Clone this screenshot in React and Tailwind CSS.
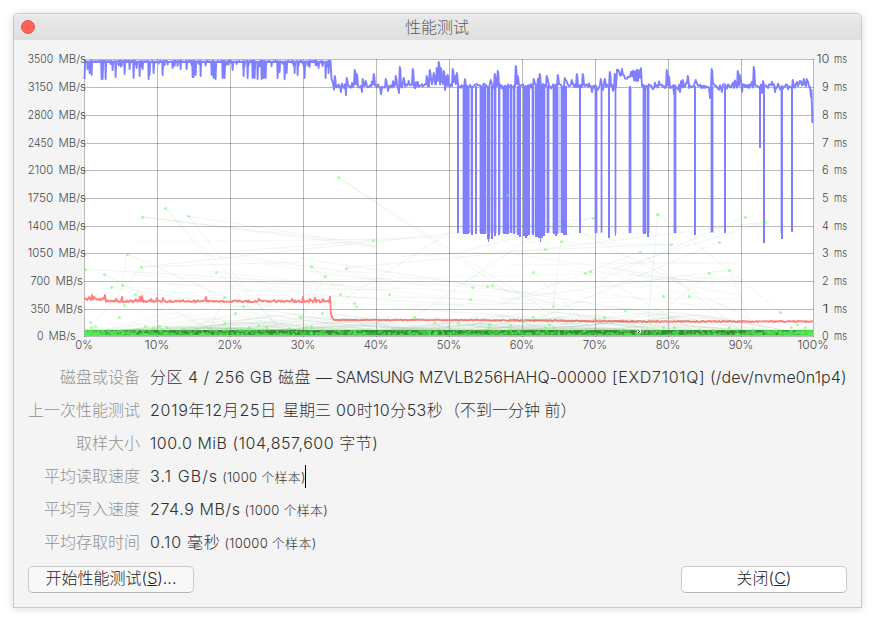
import React from 'react';

const LEFT = 84;
const RIGHT = 813;
const GRID_X = [84, 157, 230, 303, 376, 449, 522, 595, 668, 741, 813];
const GRID_Y = [59, 87, 115, 143, 170, 198, 226, 253, 281, 309, 336];

function makeRandom(seed) {
  let s = seed;
  return () => {
    s = (s * 1664525 + 1013904223) % 4294967296;
    return s / 4294967296;
  };
}

const FAST_DIPS = [
  [84, 79], [87, 69], [89, 73], [91, 75], [101, 79], [102, 79], [105, 79], [112, 70], [115, 77], [124, 74], [129, 69], [133, 78], [136, 68],
  [139, 76], [142, 69], [148, 79], [149, 75], [153, 73], [162, 75], [172, 68], [180, 69], [186, 69], [192, 77], [193, 77], [195, 75],
  [200, 76], [211, 75], [213, 78], [215, 79], [222, 78], [224, 78], [232, 70], [243, 76], [247, 78], [252, 78], [254, 78], [257, 79],
  [261, 79], [263, 78], [265, 78], [277, 78], [279, 72], [284, 79], [286, 73], [294, 73], [297, 75], [304, 78], [309, 67], [318, 68],
  [325, 78], [328, 73],
];

const PEAKS = {
  335: 76, 347: 78, 355: 70, 357: 74, 363: 79, 366: 81, 374: 74, 386: 79, 396: 76, 400: 67, 404: 78, 409: 81, 413: 69, 418: 82, 427: 76,
  430: 70, 434: 73, 437: 68, 439: 62, 441: 68, 444: 71, 448: 75, 453: 69, 455: 76, 457: 73, 491: 80, 495: 74, 498: 71, 516: 66, 518: 76,
  534: 79, 540: 74, 547: 76, 558: 75, 565: 78, 572: 80, 577: 74, 583: 74, 601: 79, 605: 79, 610: 72, 615: 74, 667: 70, 669: 76, 683: 80,
  688: 76, 696: 80, 712: 69, 738: 71, 740: 75, 754: 67, 793: 80, 800: 81, 804: 79, 807: 79,
};
const TROUGHS = { 341: 92, 346: 95, 362: 92, 381: 94, 388: 91, 399: 93, 434: 90, 445: 90, 592: 92, 674: 94, 680: 92, 710: 98, 722: 92, 742: 92, 762: 93, 775: 92 };

function readPath() {
  const rnd = makeRandom(71);
  const dips = {};
  FAST_DIPS.forEach(([x, y]) => { dips[x] = y; });
  let d = 'M84.5 79';
  for (let x = 85; x <= 330; x += 1) {
    d += ` L${x + 0.2} ${(60.6 + rnd() * 1.4).toFixed(1)}`;
    const bottom = dips[x] || (rnd() < 0.2 ? 63 + rnd() * 4 : 62);
    d += ` L${x + 0.6} ${bottom.toFixed(1)}`;
  }
  d += ' L330.5 61 L331.5 79 L333 83';
  for (let x = 334; x <= 809; x += 1) {
    let y = 84 + rnd() * 4;
    if (rnd() < 0.15) y -= rnd() * 6;
    if (rnd() < 0.15) y += rnd() * 4;
    if (x > 429 && x < 447) y = 73 + rnd() * 13;
    if (x >= 617 && x <= 622) y = 69 + rnd() * 8;
    if (x > 622 && x < 630) y = 75 + rnd() * 7;
    if (x >= 630 && x <= 641) y = x % 2 ? 68 + rnd() * 4 : 76 + rnd() * 6;
    if (PEAKS[x]) d += ` L${x - 0.3} ${PEAKS[x]} L${x + 0.3} ${PEAKS[x] + 2}`;
    else if (TROUGHS[x]) d += ` L${x} ${TROUGHS[x]}`;
    else d += ` L${x} ${y.toFixed(1)}`;
  }
  return `${d} L810 87 L811 97 L811.5 90 L812.3 123`;
}

// [x, width, bottom] of every drop below the read plateau
const DROPS = [
  [457, 2, 233], [463, 6, 234], [471, 2, 235], [475, 2, 234], [480, 6, 234], [487, 3, 239], [488, 1, 242], [491, 2, 239], [494, 2, 236],
  [498, 2, 235], [503, 6, 234], [510, 2, 233], [513, 2, 234], [517, 2, 235], [519, 2, 237], [523, 5, 236], [525, 2, 238], [528, 2, 235],
  [532, 2, 235], [535, 3, 237], [538, 5, 238], [540, 1, 242], [542, 3, 236], [547, 2, 233], [553, 5, 234], [555, 2, 236], [561, 2, 233],
  [563, 4, 235], [579, 2, 233], [595, 2, 233], [601, 1, 232], [608, 2, 238], [615, 1, 236], [629, 2, 233], [643, 3, 234], [647, 2, 237],
  [674, 2, 233], [694, 2, 235], [711, 2, 232], [724, 2, 233], [759, 2, 148], [763, 2, 243], [781, 2, 239], [791, 2, 232],
];
const HAZES = [[462, 8], [469, 3], [476, 1], [479, 14], [493, 4], [500, 1], [502, 9], [512, 4], [516, 5], [524, 6], [531, 15], [546, 4], [552, 8], [560, 7], [594, 4], [600, 3], [614, 3], [628, 4], [642, 8], [673, 4], [710, 4], [780, 3]];

function writePath() {
  const rnd = makeRandom(19);
  const peaks = { 89: 297, 92: 295, 94: 297, 103: 298, 105: 295, 116: 299, 122: 297, 136: 299, 140: 297, 142: 296, 151: 299, 157: 298, 163: 298, 183: 300, 206: 297, 259: 299, 274: 300, 292: 299, 303: 297, 310: 299, 315: 298, 323: 299 };
  let d = 'M84.5 299.5';
  for (let x = 85; x < 330; x += 1) {
    const base = x < 106 ? 299.5 : 301.4;
    const y = peaks[x] || base + (rnd() - 0.55) * 2;
    d += ` L${x} ${y.toFixed(1)}`;
  }
  d += ' L330 297 L331 314 L332.5 318';
  for (let x = 334; x <= 813; x += 1) {
    const base = x < 460 ? 320 : x < 640 ? 320 + (x - 460) / 120 : 321.5;
    d += ` L${x} ${(base + (rnd() - 0.5) * (x < 500 ? 0.8 : 1.3)).toFixed(1)}`;
  }
  return d;
}

const DOTS = [
  [85, 269], [104, 274], [111, 287], [122, 285], [127, 254], [141, 267], [142, 217], [165, 208], [188, 216], [216, 272], [224, 297], [243, 306],
  [235, 313], [135, 294], [124, 305], [119, 317], [90, 322], [91, 327], [95, 326], [145, 326], [153, 328], [159, 326], [166, 327], [224, 323],
  [249, 327], [258, 325], [266, 327], [289, 328], [338, 177], [373, 240], [311, 266], [346, 268], [325, 276], [340, 294], [389, 294], [354, 303],
  [356, 306], [322, 313], [300, 317], [414, 317], [434, 322], [306, 327], [311, 326], [448, 326], [458, 323], [472, 287], [470, 299], [487, 286],
  [492, 285], [507, 195], [489, 324], [489, 327], [510, 325], [533, 272], [545, 249], [561, 241], [553, 306], [533, 317], [524, 320], [549, 324],
  [545, 327], [553, 327], [593, 218], [585, 273], [590, 271], [604, 317], [625, 310], [640, 252], [657, 214], [671, 244], [663, 296], [689, 296],
  [650, 322], [663, 327], [674, 327], [709, 273], [729, 270], [719, 242], [745, 217], [765, 222], [780, 312], [797, 324], [729, 327], [791, 327], [805, 327],
];

const THREADS = [
  [165, 208, 270, 332], [165, 208, 284, 332], [188, 216, 278, 328], [188, 216, 376, 246], [142, 217, 376, 247], [142, 217, 320, 238],
  [339, 178, 545, 310], [339, 178, 520, 300], [127, 254, 122, 285], [127, 254, 240, 304], [141, 267, 91, 327], [141, 267, 300, 262],
  [141, 267, 593, 218], [85, 269, 346, 285], [104, 274, 216, 332], [111, 287, 400, 330], [311, 266, 354, 303], [325, 276, 300, 320],
  [373, 240, 230, 252], [346, 268, 545, 249], [561, 241, 553, 306], [414, 317, 545, 228], [545, 249, 765, 222], [533, 272, 590, 327],
  [593, 218, 460, 252], [658, 214, 647, 332], [658, 214, 729, 270], [729, 270, 780, 312], [729, 270, 755, 332], [729, 270, 500, 300],
  [709, 273, 650, 322], [719, 242, 540, 318], [745, 217, 600, 280], [765, 222, 610, 270], [671, 244, 400, 256], [640, 252, 500, 305],
  [508, 195, 770, 330], [508, 195, 340, 302], [590, 271, 690, 328], [640, 252, 740, 330], [300, 258, 748, 328], [225, 297, 208, 332],
];

function buildThreads() {
  const rnd = makeRandom(503);
  const far = [];
  const near = [];
  for (let i = 0; i < 44; i += 1) {
    const x = 90 + rnd() * 560;
    const y = 238 + rnd() * 72;
    far.push([x, y, Math.min(740, x + 80 + rnd() * 260), Math.min(331, y + (rnd() - 0.2) * 50)]);
  }
  for (let i = 0; i < 120; i += 1) {
    const x = 150 + rnd() * 560;
    const y = 312 + rnd() * 18;
    near.push([Math.max(100, x - 40 - rnd() * 160), 331, x, y]);
    near.push([x, y, Math.min(790, x + 30 + rnd() * 120), 331]);
  }
  return { far, near };
}

function buildSpeckles() {
  const rnd = makeRandom(87);
  const list = [];
  for (let i = 0; i < 760; i += 1) {
    const x = LEFT + 1 + rnd() * (RIGHT - LEFT - 2);
    const pick = rnd();
    const y = pick < 0.55 ? 333 + rnd() * 2 : pick < 0.9 ? 330 + rnd() * 4 : 329.6 + rnd() * 1.5;
    list.push([x.toFixed(1), y.toFixed(1)]);
  }
  for (let i = 0; i < 240; i += 1) {
    const x = i % 2 ? 85 + rnd() * rnd() * 90 : 812 - rnd() * rnd() * 80;
    list.push([x.toFixed(1), (330.5 + rnd() * 4).toFixed(1)]);
  }
  return list;
}

const READ = readPath();
const WRITE = writePath();
const { far: FAR, near: NEAR } = buildThreads();
const SPECKLES = buildSpeckles();

const lines = (list) => list.map(([a, b, c, d]) => `M${a.toFixed(0)} ${b.toFixed(0)}L${c.toFixed(0)} ${d.toFixed(0)}`).join('');

const SPEEDS = [3500, 3150, 2800, 2450, 2100, 1750, 1400, 1050, 700, 350, 0];

function Label({ x, y, width, children }) {
  return <text x={x} y={y} textLength={width} lengthAdjust="spacingAndGlyphs">{children}</text>;
}

function Chart() {
  return (
    <svg className="block h-[321px] w-[847px] shrink-0" viewBox="14 40 847 321">
      <rect x="84" y="59" width="730" height="278" fill="#fff" />
      <g fill="#8080ff">
        {HAZES.map(([x, w]) => <rect key={x} x={x} y="88" width={w} height="145" opacity="0.38" />)}
      </g>
      <path
        d={GRID_X.map((x) => `M${x + 0.5} 59V337`).join('') + GRID_Y.map((y) => `M84 ${y + 0.5}H814`).join('')}
        stroke="#000"
        strokeOpacity="0.27"
        fill="none"
      />
      <g fill="#8080ff">
        {DROPS.map(([x, w, b]) => <rect key={`${x}-${w}`} x={x} y="86" width={w} height={b - 86} />)}
      </g>
      <path d={READ} fill="none" stroke="#8080ff" strokeWidth="1.9" strokeLinejoin="round" />
      <path d={WRITE} fill="none" stroke="#ff8080" strokeWidth="1.9" strokeLinejoin="round" />
      <path d={lines(THREADS)} stroke="#246b24" strokeOpacity="0.07" fill="none" />
      <path d={lines(FAR)} stroke="#246b24" strokeOpacity="0.045" fill="none" />
      <path d={lines(NEAR)} stroke="#246b24" strokeOpacity="0.04" fill="none" />
      <rect x="85" y="330" width="728" height="5.5" fill="#358a35" />
      <rect x="85" y="334.8" width="728" height="1.2" fill="#5df05d" />
      <g fill="#55ee55">
        {SPECKLES.map(([x, y], i) => <circle key={i} cx={x} cy={y} r="1.2" opacity="0.5" />)}
      </g>
      <g fill="#66ff66" fillOpacity="0.58">
        {DOTS.map(([x, y]) => <circle key={`${x}-${y}`} cx={x + 0.5} cy={y + 0.5} r="1.55" />)}
      </g>
      <rect x="637" y="330" width="4" height="3" fill="#fff" />
      <path d="M638 330.5h1M639 331.5h1M638 332.5h1" stroke="#333" />
      <g fill="#484848" fontFamily="Inter, 'Liberation Sans', sans-serif" fontSize="11" fontWeight="300">
        {SPEEDS.map((v, i) => {
          const start = v >= 1000 ? 27.8 : v > 0 ? 30.5 : 37;
          const digits = v >= 1000 ? 25.4 : v > 0 ? 19.5 : 6.5;
          const unit = v >= 1000 ? 58.5 : v > 0 ? 55.5 : 48.5;
          return (
            <g key={v}>
              <Label x={start} y={GRID_Y[i] + 4} width={digits}>{v}</Label>
              <Label x={unit} y={GRID_Y[i] + 4} width={27.5}>MB/s</Label>
            </g>
          );
        })}
        {SPEEDS.map((v, i) => (
          <g key={v}>
            <Label x={i === 0 ? 816.5 : 822} y={GRID_Y[i] + 4} width={i === 0 ? 13 : 6.7}>{10 - i}</Label>
            <Label x={834} y={GRID_Y[i] + 4} width={13}>ms</Label>
          </g>
        ))}
        {GRID_X.map((x, i) => {
          const wide = i === 0 ? 17.5 : i === 10 ? 31 : 24.5;
          return <Label key={x} x={x - wide / 2} y={349} width={wide}>{`${i * 10}%`}</Label>;
        })}
      </g>
    </svg>
  );
}

function Row({ label, children }) {
  return (
    <div className="flex h-[33px] items-center whitespace-nowrap text-[16px] leading-[33px]">
      <span className="w-[126px] shrink-0 text-right text-[#929292]">{label}</span>
      <span className="ml-[10px] flex items-center text-[#303030]">{children}</span>
    </div>
  );
}

function Small({ children }) {
  return <span className="ml-[4px] pt-[2px] text-[13px] tracking-[0.27px]">{children}</span>;
}

export default function App() {
  return (
    <div className="h-[621px] w-[875px] overflow-hidden bg-white pl-[13px] pt-[13px] font-['Inter','Noto_Sans_CJK_SC',sans-serif] font-light">
      <div className="flex h-[595px] w-[849px] flex-col overflow-hidden rounded-t-[5px] border border-[#c9c9c9] bg-[#f4f4f4] shadow-[0_1px_9px_rgba(0,0,0,0.14)]">
        <div className="flex h-[26px] shrink-0 items-center border-t border-[#f3f3f3] bg-gradient-to-b from-[#e9e9e9] to-[#dfdfdf] pb-[2px]">
          <span className="ml-[7px] size-[14px] rounded-full border border-[#e2574e] bg-[#ff6157]" />
          <span className="mr-[22px] flex-1 text-center text-[16px] leading-[22px] text-[#5c5c5c]">性能测试</span>
        </div>
        <Chart />
        <div className="flex shrink-0 flex-col">
          <Row label="磁盘或设备">
            <span className="w-[186px] tracking-[0.47px]">分区 4 / 256 GB 磁盘 —</span>
            <span className="w-[83px] tracking-[-0.5px]">SAMSUNG</span>
            <span className="w-[193px] tracking-[0.05px]">MZVLB256HAHQ-00000</span>
            <span className="w-[98px] tracking-[0.7px]">[EXD7101Q]</span>
            <span className="tracking-[0.12px]">(/dev/nvme0n1p4)</span>
          </Row>
          <Row label="上一次性能测试">
            <span className="w-[133px] tracking-[0.72px]">2019年12月25日</span>
            <span className="w-[53px]">星期三</span>
            <span className="w-[108px] tracking-[0.45px]">00时10分53秒</span>
            <span>（不到一分钟 前）</span>
          </Row>
          <Row label="取样大小"><span className="tracking-[0.54px]">100.0 MiB (104,857,600 字节)</span></Row>
          <Row label="平均读取速度">
            <span className="tracking-[1.1px]">3.1 GB/s</span><Small>(1000 个样本)</Small>
            <span className="-ml-px h-[23px] w-px bg-black" />
          </Row>
          <Row label="平均写入速度"><span className="tracking-[0.6px]">274.9 MB/s</span><Small>(1000 个样本)</Small></Row>
          <Row label="平均存取时间"><span className="tracking-[0.75px]">0.10 毫秒</span><Small>(10000 个样本)</Small></Row>
        </div>
        <div className="mt-[7px] flex shrink-0 justify-between pl-[14px] pr-[14px] text-[16px] leading-[23px] text-[#222]">
          <button className="h-[27px] w-[166px] rounded-[5px] border border-[#cacaca] border-b-[#b4b4b4] bg-[#f8f8f8] pb-[2px]">开始性能测试(<u>S</u>)...</button>
          <button className="h-[27px] w-[166px] rounded-[5px] border border-[#cacaca] border-b-[#b4b4b4] bg-white pb-[2px]">关闭(<u>C</u>)</button>
        </div>
      </div>
    </div>
  );
}
